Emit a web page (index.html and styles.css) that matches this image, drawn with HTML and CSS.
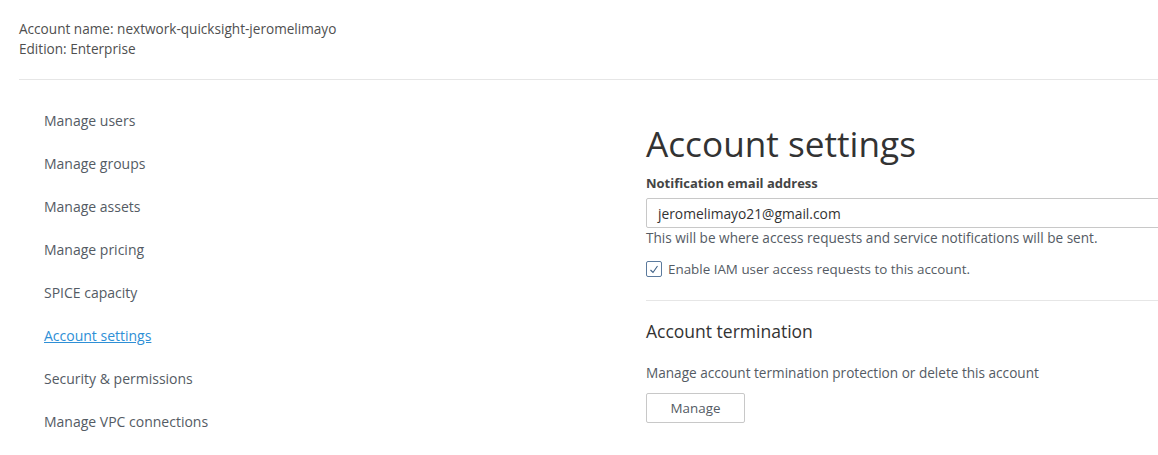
FILE: index.html
```html
<!DOCTYPE html>
<html>
<head>
<meta charset="utf-8">
<link rel="stylesheet" href="styles.css">
</head>
<body>
<div class="page">
  <header class="acct">
    <div class="acct-line">Account name: nextwork-quicksight-jeromelimayo</div>
    <div class="acct-line">Edition: Enterprise</div>
  </header>
  <div class="rule"></div>
  <div class="main">
    <nav class="nav">
      <a class="nav-item">Manage users</a>
      <a class="nav-item">Manage groups</a>
      <a class="nav-item">Manage assets</a>
      <a class="nav-item">Manage pricing</a>
      <a class="nav-item">SPICE capacity</a>
      <a class="nav-item active">Account settings</a>
      <a class="nav-item">Security &amp; permissions</a>
      <a class="nav-item">Manage VPC connections</a>
    </nav>
    <section class="content">
      <h1 class="title">Account settings</h1>
      <div class="field-label">Notification email address</div>
      <div class="input">jeromelimayo21@gmail.com</div>
      <div class="help">This will be where access requests and service notifications will be sent.</div>
      <label class="check-row">
        <span class="checkbox"><svg width="10" height="9" viewBox="0 0 10 9"><path d="M1.5 5 L4 7.5 L8.5 1" fill="none" stroke="#3d5f85" stroke-width="1.1"/></svg></span>
        <span>Enable IAM user access requests to this account.</span>
      </label>
      <div class="divider"></div>
      <h2 class="subtitle">Account termination</h2>
      <div class="desc">Manage account termination protection or delete this account</div>
      <button class="btn">Manage</button>
    </section>
  </div>
</div>
</body>
</html>
```
FILE: styles.css
```css
html, body {
  margin: 0;
  padding: 0;
  background: #fff;
}
body {
  font-family: "Open Sans", "Noto Sans", sans-serif;
  color: #545b64;
  overflow: hidden;
}
.page {
  width: 1158px;
  height: 455px;
  overflow: hidden;
}
.acct {
  padding: 19px 0 0 19px;
}
.acct-line {
  font-size: 13.6px;
  line-height: 20px;
  color: #4f4f4f;
}
.rule {
  margin: 20px 0 0 19px;
  border-top: 1px solid #e6e6e6;
}
.main {
  display: flex;
  padding-top: 19px;
}
.nav {
  width: 602px;
  padding-left: 44px;
  display: flex;
  flex-direction: column;
}
.nav-item {
  font-size: 14px;
  line-height: 43px;
  height: 43px;
  color: #545b64;
}
.nav-item.active {
  color: #2e8fd6;
  text-decoration: underline;
}
.content {
  flex: 1;
  display: flex;
  flex-direction: column;
  min-width: 0;
  padding-top: 1px;
}
.title {
  margin: 21px 0 0 0;
  font-size: 35.2px;
  line-height: 44px;
  font-weight: 400;
  color: #333;
}
.field-label {
  margin-top: 8px;
  font-size: 13px;
  line-height: 20px;
  font-weight: 700;
  color: #444;
}
.input {
  margin-top: 5px;
  height: 28px;
  width: 600px;
  border: 1px solid #c8c8c8;
  border-radius: 2px;
  padding-left: 11px;
  font-size: 13.8px;
  line-height: 29px;
  color: #333;
}
.help {
  font-size: 13.6px;
  line-height: 20px;
  color: #545b64;
}
.check-row {
  margin-top: 11px;
  display: flex;
  align-items: center;
  gap: 6px;
  font-size: 13.4px;
  line-height: 20px;
}
.checkbox {
  width: 14px;
  height: 14px;
  border: 1px solid #5b7a9d;
  border-radius: 2px;
  display: flex;
  align-items: center;
  justify-content: center;
}
.divider {
  margin-top: 21px;
  border-top: 1px solid #e6e6e6;
  width: 600px;
}
.subtitle {
  margin: 18px 0 0 0;
  font-size: 17.5px;
  line-height: 24px;
  font-weight: 400;
  color: #333;
}
.desc {
  margin-top: 20px;
  font-size: 13.6px;
  line-height: 20px;
}
.btn {
  margin-top: 10px;
  width: 99px;
  height: 30px;
  border: 1px solid #c8c8c8;
  border-radius: 2px;
  background: #fff;
  font-family: inherit;
  font-size: 13.4px;
  color: #545b64;
  padding: 0;
}
```
